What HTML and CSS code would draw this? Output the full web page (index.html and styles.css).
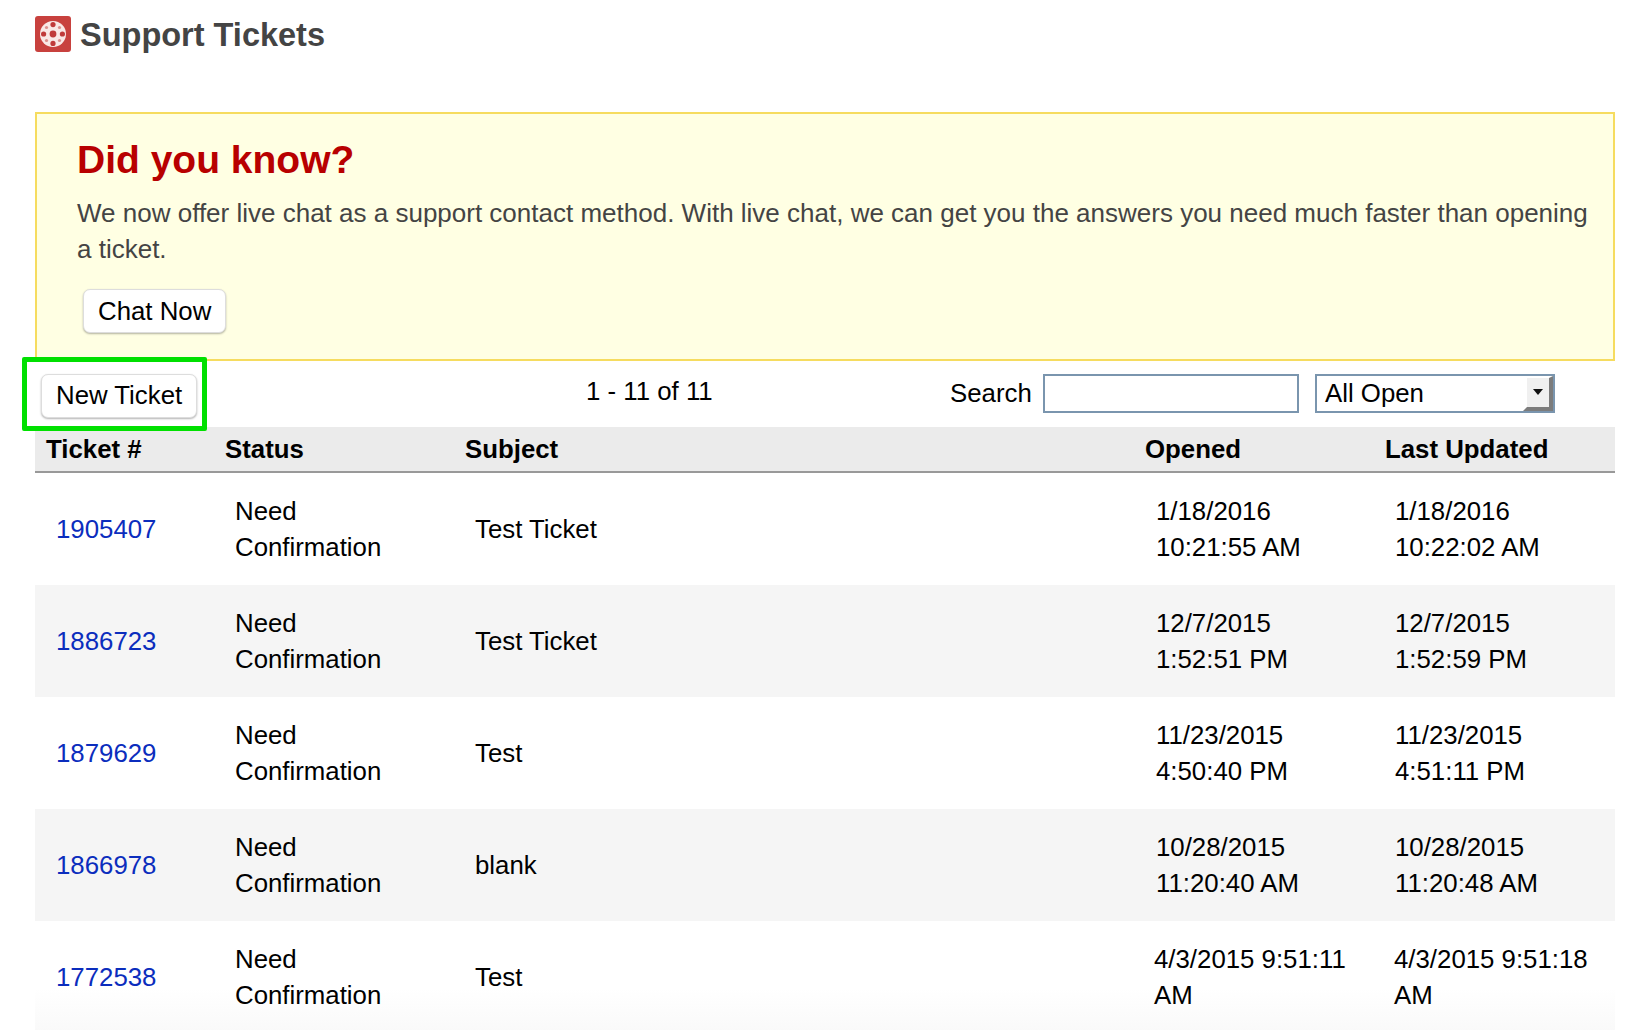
FILE: index.html
```html
<!DOCTYPE html>
<html lang="en">
<head>
  <meta charset="UTF-8" />
  <title>Support Tickets</title>
  <link rel="stylesheet" href="styles.css">
</head>
<body>
  <div class="page">
    <h1 class="page-title">
      <svg class="title-icon" viewBox="0 0 36 36" width="36" height="36">
        <rect width="36" height="36" rx="3" fill="#c8413e"/>
        <circle cx="18" cy="18" r="13" fill="#f9e8e6"/>
        <g fill="#c03a3a">
          <circle cx="18" cy="18" r="3.4"/>
          <circle cx="18" cy="8.6" r="2.6"/>
          <circle cx="18" cy="27.4" r="2.6"/>
          <circle cx="8.6" cy="18" r="2.6"/>
          <circle cx="27.4" cy="18" r="2.6"/>
        </g>
        <g fill="#dc8f8c">
          <circle cx="11.5" cy="11.5" r="1.6"/>
          <circle cx="24.5" cy="11.5" r="1.6"/>
          <circle cx="11.5" cy="24.5" r="1.6"/>
          <circle cx="24.5" cy="24.5" r="1.6"/>
        </g>
      </svg>
      <span class="title-text">Support Tickets</span>
    </h1>

    <div class="notice">
      <h2>Did you know?</h2>
      <p>We now offer live chat as a support contact method. With live chat, we can get you the answers you need much faster than opening a ticket.</p>
      <button class="btn">Chat Now</button>
    </div>

    <div class="toolbar">
      <div class="new-ticket">
        <button class="btn">New Ticket</button>
      </div>
      <div class="count">1 - 11 of 11</div>
      <label class="search-label" for="search">Search</label>
      <input class="search-input" id="search" type="text">
      <div class="filter">
        <span>All Open</span>
        <span class="filter-arrow"></span>
      </div>
    </div>

    <table class="tickets">
      <thead>
        <tr>
          <th class="col-id">Ticket #</th>
          <th class="col-status">Status</th>
          <th class="col-subject">Subject</th>
          <th class="col-opened">Opened</th>
          <th class="col-updated">Last Updated</th>
        </tr>
      </thead>
      <tbody>
        <tr>
          <td><a href="#">1905407</a></td>
          <td>Need<br>Confirmation</td>
          <td>Test Ticket</td>
          <td class="date">1/18/2016<br>10:21:55 AM</td>
          <td>1/18/2016<br>10:22:02 AM</td>
        </tr>
        <tr>
          <td><a href="#">1886723</a></td>
          <td>Need<br>Confirmation</td>
          <td>Test Ticket</td>
          <td class="date">12/7/2015<br>1:52:51 PM</td>
          <td>12/7/2015<br>1:52:59 PM</td>
        </tr>
        <tr>
          <td><a href="#">1879629</a></td>
          <td>Need<br>Confirmation</td>
          <td>Test</td>
          <td class="date">11/23/2015<br>4:50:40 PM</td>
          <td>11/23/2015<br>4:51:11 PM</td>
        </tr>
        <tr>
          <td><a href="#">1866978</a></td>
          <td>Need<br>Confirmation</td>
          <td>blank</td>
          <td class="date">10/28/2015<br>11:20:40 AM</td>
          <td>10/28/2015<br>11:20:48 AM</td>
        </tr>
        <tr>
          <td><a href="#">1772538</a></td>
          <td>Need<br>Confirmation</td>
          <td>Test</td>
          <td class="date-wrap">4/3/2015 9:51:11 AM</td>
          <td class="date-wrap">4/3/2015 9:51:18 AM</td>
        </tr>
      </tbody>
    </table>
  </div>
</body>
</html>
```

FILE: styles.css
```css
html, body {
  margin: 0;
  height: 1030px;
  overflow: hidden;
  background: #fff;
}
body {
  font-family: "Liberation Sans", Arial, sans-serif;
  font-size: 25.8px;
  color: #000;
}
.page {
  padding: 16px 15px 0 35px;
}
.page-title {
  display: flex;
  align-items: center;
  gap: 9px;
  margin: 0;
  height: 36px;
  font-size: 32.5px;
  font-weight: bold;
  color: #444;
}
.title-icon {
  flex: none;
}
.title-text {
  padding-top: 2px;
}
.notice {
  box-sizing: border-box;
  height: 249px;
  margin-top: 60px;
  padding: 24px 24px 0 40px;
  background: #ffffe3;
  border: 2px solid #f6dc5f;
}
.notice h2 {
  margin: 0;
  font-size: 39px;
  line-height: 44px;
  font-weight: bold;
  color: #b80000;
}
.notice p {
  margin: 13px 0 0;
  line-height: 36px;
  font-size: 26px;
  color: #444;
}
.btn {
  box-sizing: border-box;
  height: 44px;
  padding: 0 14px;
  font: inherit;
  color: #000;
  background: #fff;
  border: 1px solid #ddd;
  border-radius: 7px;
  box-shadow: 0 1px 2px rgba(0,0,0,0.3);
}
.notice .btn {
  margin: 22px 0 0 6px;
}
.toolbar {
  display: flex;
  align-items: center;
  height: 65px;
}
.new-ticket {
  position: relative;
  width: 350px;
  padding-left: 6px;
  margin-top: 4px;
}
.new-ticket::before {
  content: "";
  position: absolute;
  left: -13px;
  top: -17px;
  width: 175px;
  height: 64px;
  border: 5px solid #00e000;
  border-radius: 2px;
}
.count {
  box-sizing: border-box;
  width: 560px;
  padding-left: 195px;
  margin-top: -4px;
  white-space: nowrap;
}
.search-label {
  margin-left: -1px;
  width: 93px;
}
.search-input {
  box-sizing: border-box;
  width: 256px;
  height: 39px;
  padding: 0;
  margin: 0 0 1px;
  background: #fff;
  border: 2px solid #7a95ae;
}
.filter {
  display: flex;
  align-items: center;
  justify-content: space-between;
  box-sizing: border-box;
  width: 240px;
  height: 39px;
  margin: 0 0 1px 16px;
  padding-left: 8px;
  background: #fff;
  border: 2px solid #7a95ae;
}
.filter-arrow {
  position: relative;
  box-sizing: border-box;
  width: 30px;
  height: 35px;
  background: #f0f0f0;
  border-style: solid;
  border-width: 2px 4px 4px 4px;
  border-color: #fff #7c7c7c #7c7c7c #fff;
}
.filter-arrow::after {
  content: "";
  position: absolute;
  left: 6px;
  top: 11px;
  border-left: 5px solid transparent;
  border-right: 5px solid transparent;
  border-top: 6px solid #111;
}
.tickets {
  width: 100%;
  margin-top: 1px;
  table-layout: fixed;
  border-collapse: collapse;
}
.tickets th {
  height: 44px;
  padding: 0 0 0 11px;
  text-align: left;
  font-weight: bold;
  background: #ebebeb;
  border-bottom: 2px solid #999;
}
.col-id { width: 168px; }
.col-status { width: 229px; }
.col-subject { width: 669px; }
.col-opened { width: 229px; }
.tickets td {
  height: 112px;
  padding: 0 8px 0 21px;
  line-height: 36px;
  vertical-align: middle;
}
.tickets tbody tr:nth-child(even) td {
  background: #f5f5f5;
}
.tickets tbody tr:last-child td {
  background: linear-gradient(#fff 60%, #f9f9f9);
}
.tickets td.date {
  padding-left: 22px;
}
.tickets td.date-wrap {
  padding-left: 20px;
}
.tickets a {
  color: #0b2dbd;
  text-decoration: none;
}
```
